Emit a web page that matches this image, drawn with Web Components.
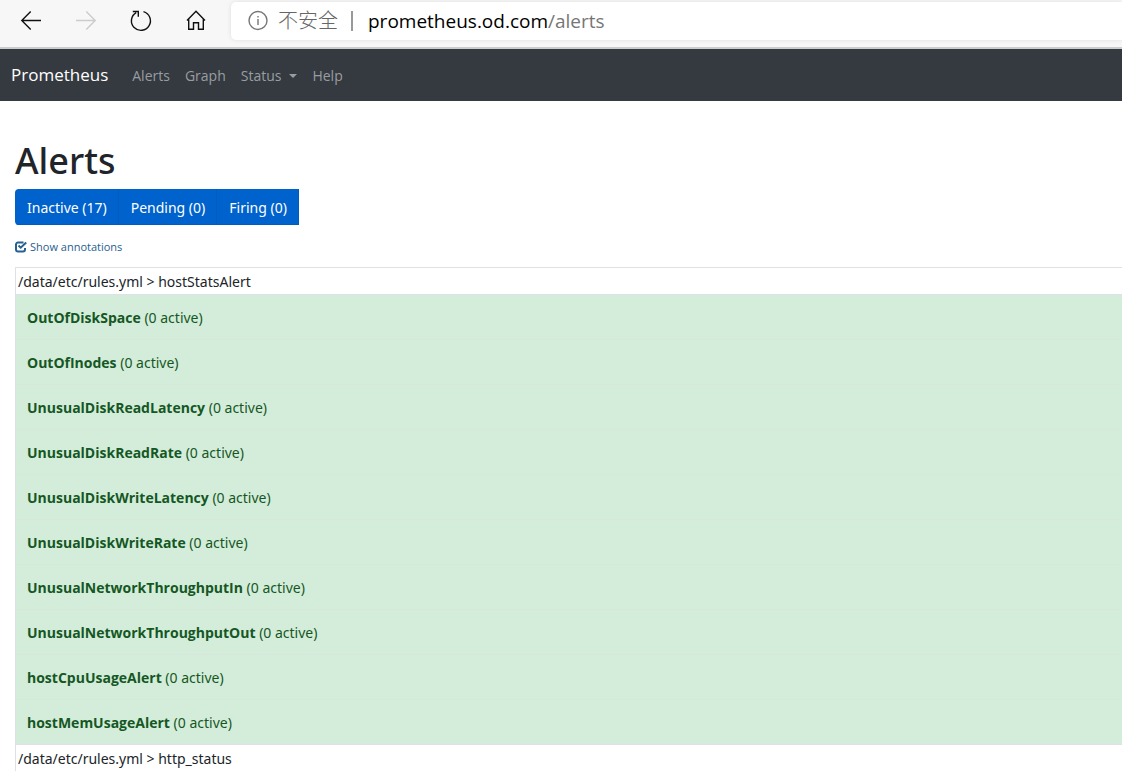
<!DOCTYPE html>
<html lang="en">
<head>
<meta charset="utf-8">
<meta name="viewport" content="width=device-width, initial-scale=1">
<title>Prometheus Alerts</title>
<style>
  html, body { margin: 0; background: #fff; }
  body { font: 14px/24px "Open Sans", "Noto Sans CJK SC", sans-serif; color: #212529; overflow: hidden; }
</style>
</head>
<body>
<browser-bar>
  <span slot="security">不安全</span>
  <span slot="host">prometheus.od.com</span><span slot="path">/alerts</span>
</browser-bar>
<site-nav>
  <span slot="brand">Prometheus</span>
  <nav-item>Alerts</nav-item>
  <nav-item>Graph</nav-item>
  <nav-item menu>Status</nav-item>
  <nav-item>Help</nav-item>
</site-nav>
<alerts-page>
  <state-filter slot="filters">
    <state-button>Inactive (17)</state-button>
    <state-button>Pending (0)</state-button>
    <state-button>Firing (0)</state-button>
  </state-filter>
  <annotation-toggle slot="filters">Show annotations</annotation-toggle>
  <rule-group file="/data/etc/rules.yml" name="hostStatsAlert"
    rules="OutOfDiskSpace OutOfInodes UnusualDiskReadLatency UnusualDiskReadRate UnusualDiskWriteLatency UnusualDiskWriteRate UnusualNetworkThroughputIn UnusualNetworkThroughputOut hostCpuUsageAlert hostMemUsageAlert"></rule-group>
  <rule-group file="/data/etc/rules.yml" name="http_status" rules=""></rule-group>
</alerts-page>
<script>
const define = (name, html, setup) => {
  const template = document.createElement('template');
  template.innerHTML = html;
  customElements.define(name, class extends HTMLElement {
    constructor() {
      super();
      this.attachShadow({ mode: 'open' }).append(template.content.cloneNode(true));
    }
    connectedCallback() { if (setup) setup(this, this.shadowRoot); }
  });
};

define('browser-bar', `
  <style>
    :host { display: flex; height: 47px; background: #f7f7f7; border-bottom: 2px solid #cbcdcc; }
    .tools { display: flex; flex: none; align-items: center; gap: 25px; padding: 0 20px 6px 16px; }
    button { all: unset; display: block; width: 30px; height: 30px; color: #111; }
    button:disabled { color: #ccc; }
    svg { display: block; fill: none; stroke: currentColor; stroke-width: 1.4; }
    .address { display: flex; flex: 1; align-items: center; height: 38px; margin-top: 2px; padding-left: 16px;
      box-sizing: border-box; background: #fff; border-radius: 5px 0 0 5px; box-shadow: 0 0 5px #0000001a;
      font-size: 19px; line-height: 30px; color: #767676; white-space: nowrap; }
    .info { stroke-width: 1.4; margin-right: 9px; }
    .security { font-size: 20px; font-weight: 300; color: #666; }
    .divider { width: 2px; height: 20px; margin: 0 15px 0 13px; background: #999; }
    .host { color: #000; }
  </style>
  <div class="tools">
    <button aria-label="Back"><svg width="30" height="30" viewBox="0 0 30 30"><path d="M25 14.500H6M14.700 5.500L5.800 14.500L14.700 23.500"/></svg></button>
    <button aria-label="Forward" disabled><svg width="30" height="30" viewBox="0 0 30 30"><path d="M5 14.500H24.500M15.300 5.500L24.200 14.500L15.300 23.500"/></svg></button>
    <button aria-label="Refresh"><svg width="30" height="30" viewBox="0 0 30 30"><path d="M17.500 5.700A9.500 9.500 0 1 1 10.200 6.600M6.800 5.500H12.300V10.800"/></svg></button>
    <button aria-label="Home"><svg width="30" height="30" viewBox="0 0 30 30"><path d="M6 14.500L15 5.300L24 14.500M7.700 13V23.300H12.500V16.700H17.500V23.300H22.300V13"/></svg></button>
  </div>
  <div class="address">
    <svg class="info" width="22" height="22" viewBox="0 0 22 22" aria-hidden="true"><circle cx="11" cy="10.500" r="9"/><path d="M11 9V15M11 6V7.500"/></svg>
    <span class="security"><slot name="security"></slot></span>
    <span class="divider"></span>
    <span class="host"><slot name="host"></slot></span><slot name="path"></slot>
  </div>`);

define('site-nav', `
  <style>
    :host { display: block; background: #343a40; }
    nav { display: flex; align-items: center; height: 52px; padding: 0 11px; gap: 15px; }
    a { color: #fff; font-size: 17px; text-decoration: none; margin-right: 9px; }
  </style>
  <nav><a href="#home"><slot name="brand"></slot></a><slot></slot></nav>`);

define('nav-item', `
  <style>
    :host { display: block; padding-top: 2px; }
    a { display: flex; align-items: center; color: #9a9da0; text-decoration: none; }
    :host([menu]) a::after { content: ""; margin-left: 8px; border: 4px solid transparent; border-top-color: currentColor; border-bottom: 0; }
  </style>
  <a href="#page"><slot></slot></a>`);

define('alerts-page', `
  <style>
    :host { display: block; padding: 36px 0 0 15px; }
    h1 { margin: 0 0 4px; font-family: "Noto Sans", sans-serif; font-size: 36px; line-height: 48px; font-weight: 500; }
  </style>
  <h1>Alerts</h1>
  <slot name="filters"></slot>
  <slot></slot>`);

define('state-filter', `
  <style>
    :host { display: flex; width: max-content; border-radius: 4px 0 0 4px; overflow: hidden; }
  </style>
  <slot></slot>`);

define('state-button', `
  <style>
    :host { display: block; }
    button { display: block; height: 36px; margin: 0; padding: 2px 12px 0; border: 0; font: inherit; font-family: "Noto Sans", sans-serif; color: #fff;
      background: #0062cc; box-shadow: inset -1px -1px #005cbf; }
  </style>
  <button type="button"><slot></slot></button>`);

define('annotation-toggle', `
  <style>
    :host { display: block; margin: 12px 0 10px; color: #286090; font-size: 11px; line-height: 20px; }
    label { display: flex; width: max-content; align-items: center; gap: 3px; }
    input { position: absolute; opacity: 0; width: 12px; height: 12px; margin: 0; }
    input:not(:checked) + svg .tick { display: none; }
    svg { fill: none; stroke: currentColor; stroke-width: 2; }
  </style>
  <label><input type="checkbox" checked><svg width="12" height="12" viewBox="0 0 12 12" aria-hidden="true"><path d="M8.500 1.500H3A2 2 0 0 0 1 3.500V8.500A2 2 0 0 0 3 10.500H8A2 2 0 0 0 10 8.500V7"/><path class="tick" d="M3.500 4.500L5.700 6.700L11.200 1.500"/></svg><span><slot></slot></span></label>`);

define('rule-group', `
  <style>
    :host { display: block; }
    table { width: 100%; border-spacing: 0; border-left: 1px solid #dee2e6; font-family: "Noto Sans", sans-serif; }
    th, td { box-sizing: border-box; text-align: left; border-top: 1px solid #dee2e6; font-weight: 400; }
    th { height: 27px; padding: 2px 2px 0; }
    td { height: 45px; padding: 2px 11px 0; background: #d4edda; color: #155724; }
    tbody tr + tr td { border-color: #d6e8dc; }
    b { font-family: "Open Sans", sans-serif; font-weight: 700; }
  </style>
  <table><thead><tr><th scope="col"></th></tr></thead><tbody></tbody></table>`,
  (host, root) => {
    root.querySelector('th').textContent = host.getAttribute('file') + ' > ' + host.getAttribute('name');
    const rows = host.getAttribute('rules').split(' ').filter(Boolean).map(rule => {
      const row = document.createElement('tr');
      const name = document.createElement('b');
      name.textContent = rule;
      row.insertCell().append(name, ' (0 active)');
      return row;
    });
    root.querySelector('tbody').replaceChildren(...rows);
  });
</script>
</body>
</html>
